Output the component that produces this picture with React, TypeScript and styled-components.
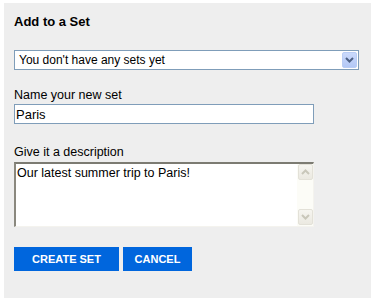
import React from "react";
import styled, { createGlobalStyle } from "styled-components";

const Global = createGlobalStyle`
  html, body { margin: 0; padding: 0; background: #ffffff; }
  * { box-sizing: border-box; }
`;

const Panel = styled.form`
  margin: 3px 0 0 4px;
  background: #eeeeee;
  padding: 11px 10px 27px 10px;
  display: flex;
  flex-direction: column;
  align-items: flex-start;
  font-family: "Liberation Sans", Arial, sans-serif;
  color: #000;
`;

const Title = styled.h2`
  margin: 0;
  font-size: 13px;
  font-weight: bold;
  line-height: 15px;
`;

const SelectBox = styled.div`
  margin-top: 21px;
  width: 345px;
  height: 20px;
  border: 1px solid #7f9db9;
  background: #fff;
  display: flex;
  align-items: center;
  justify-content: space-between;
  padding: 0 1px 0 4px;
  font-size: 12px;
`;

const DropButton = styled.div`
  width: 15px;
  height: 16px;
  border-radius: 2px;
  border: 1px solid #b9cdf5;
  background: linear-gradient(#cad9fb, #b3c8f6);
  display: flex;
  align-items: center;
  justify-content: center;
`;

const Label = styled.label<{ $gap: number }>`
  display: block;
  margin-top: ${(p) => p.$gap}px;
  margin-bottom: 1px;
  font-size: 12.5px;
  line-height: 15px;
`;

const TextInput = styled.input`
  width: 300px;
  height: 20px;
  border: 1px solid #7f9db9;
  background: #fff;
  padding: 0 1px;
  margin: 0;
  font-family: "Liberation Sans", Arial, sans-serif;
  font-size: 13px;
  color: #000;
  outline: none;
`;

const AreaBox = styled.div`
  margin-top: 1px;
  width: 300px;
  height: 65px;
  border-style: solid;
  border-width: 2px 1px 1px 2px;
  border-color: #7c7b72 #f4f3ee #f4f3ee #8a887e;
  box-shadow: inset 0 0 0 0 transparent;
  background: #fff;
  display: flex;
`;

const Area = styled.textarea`
  flex: 1;
  border: none;
  resize: none;
  overflow: hidden;
  padding: 2px 1px;
  margin: 0;
  font-family: "Liberation Sans", Arial, sans-serif;
  font-size: 12.5px;
  line-height: 15px;
  color: #000;
  outline: none;
`;

const ScrollTrack = styled.div`
  width: 16px;
  background: #fcfcf7;
  display: flex;
  flex-direction: column;
  justify-content: space-between;
  align-items: center;
  padding: 0 0 1px 0;
`;

const ScrollButton = styled.div`
  width: 15px;
  height: 16px;
  border: 1px solid #e3e1d8;
  border-radius: 2px;
  background: linear-gradient(#f6f5f0, #ebe9e1);
  display: flex;
  align-items: center;
  justify-content: center;
`;

const ButtonRow = styled.div`
  margin-top: 20px;
  display: flex;
  gap: 4px;
`;

const ActionButton = styled.button<{ $width: number }>`
  width: ${(p) => p.$width}px;
  height: 24px;
  border: none;
  padding: 0;
  background: #0066dd;
  color: #fff;
  font-family: "Liberation Sans", Arial, sans-serif;
  font-size: 11px;
  font-weight: bold;
  cursor: pointer;
`;

const Chevron = ({ up, color, w = 7 }: { up?: boolean; color: string; w?: number }) => (
  <svg width={w + 2} height={6} viewBox="0 0 9 6">
    <path
      d={up ? "M1 5 L4.5 1.5 L8 5" : "M1 1 L4.5 4.5 L8 1"}
      fill="none"
      stroke={color}
      strokeWidth={2}
    />
  </svg>
);

export default function App() {
  return (
    <>
      <Global />
      <Panel onSubmit={(e) => e.preventDefault()}>
        <Title>Add to a Set</Title>
        <SelectBox>
          <span>You don't have any sets yet</span>
          <DropButton>
            <Chevron color="#4d6185" />
          </DropButton>
        </SelectBox>
        <Label $gap={18}>Name your new set</Label>
        <TextInput defaultValue="Paris" />
        <Label $gap={21}>Give it a description</Label>
        <AreaBox>
          <Area defaultValue="Our latest summer trip to Paris!" />
          <ScrollTrack>
            <ScrollButton>
              <Chevron up color="#c9c7ba" />
            </ScrollButton>
            <ScrollButton>
              <Chevron color="#c9c7ba" />
            </ScrollButton>
          </ScrollTrack>
        </AreaBox>
        <ButtonRow>
          <ActionButton $width={105}>CREATE SET</ActionButton>
          <ActionButton $width={69}>CANCEL</ActionButton>
        </ButtonRow>
      </Panel>
    </>
  );
}
